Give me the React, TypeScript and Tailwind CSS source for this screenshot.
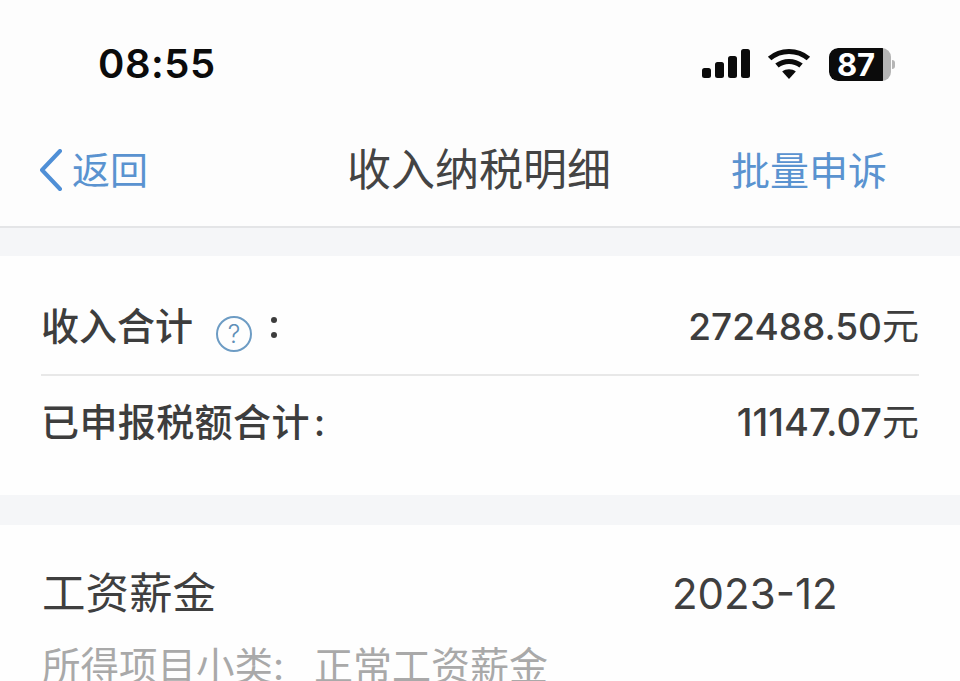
export default function App() {
  const font = { fontFamily: '"Inter", "Noto Sans CJK SC", sans-serif' };
  return (
    <div className="w-[960px] h-[681px] overflow-hidden bg-white flex flex-col" style={font}>
      {/* status bar */}
      <div className="h-[130px] shrink-0 flex items-start justify-between pt-[40px] pl-[98px] pr-[65px] bg-[#fdfdfd]">
        <div className="text-[40px] leading-[48px] font-semibold text-[#0b0b0b] tracking-[0.5px]">08:55</div>
        <div className="flex items-center gap-[19px] h-[48px]">
          <svg width="48" height="30" viewBox="0 0 48 30" fill="#0b0b0b">
            <rect x="0" y="19" width="9" height="10" rx="2.5" />
            <rect x="13" y="13" width="9" height="16" rx="2.5" />
            <rect x="26" y="7" width="9" height="22" rx="2.5" />
            <rect x="39" y="0" width="9" height="29" rx="2.5" />
          </svg>
          <svg width="44" height="32" viewBox="0 0 42 32" preserveAspectRatio="none" fill="none" stroke="#0b0b0b" strokeWidth="5" className="ml-[-2px]">
            <path d="M2.5 10.5 C13 1, 29 1, 39.5 10.5" />
            <path d="M9.5 17.5 C16 12, 26 12, 32.5 17.5" />
            <path d="M21 31 L14.5 23.5 C18 20.5, 24 20.5, 27.5 23.5 Z" fill="#0b0b0b" stroke="none" />
          </svg>
          <div className="flex items-center ml-[-1px]">
            <div className="relative w-[62px] h-[33px] rounded-[9px] bg-[#b5b5b5] overflow-hidden">
              <div className="w-[54px] h-full bg-[#0b0b0b] flex items-center justify-center text-white font-bold text-[31px] leading-none rounded-l-[9px]">87</div>
            </div>
            <div className="w-[3px] h-[9px] rounded-r-full bg-[#b5b5b5] ml-[1px]" />
          </div>
        </div>
      </div>

      {/* nav */}
      <div className="h-[96px] shrink-0 flex items-center justify-between pl-[39px] pr-[73px] pb-[16px] bg-[#fdfdfd] relative">
        <div className="flex items-center gap-[9px] text-[#5a93d0] text-[38px] leading-none">
          <svg width="24" height="42" viewBox="0 0 24 42" fill="none" stroke="#4f8fd6" strokeWidth="4" strokeLinecap="round" strokeLinejoin="round">
            <path d="M21 2 L3 21 L21 40" />
          </svg>
          <span>返回</span>
        </div>
        <div className="absolute left-[347px] top-[10px] text-[44px] leading-[60px] text-[#444444]">收入纳税明细</div>
        <div className="text-[#5a93d0] text-[39px] leading-none">批量申诉</div>
      </div>
      <div className="h-[2px] shrink-0 bg-[#e4e5e7]" />
      <div className="h-[28px] shrink-0 bg-[#f5f6f8]" />

      {/* summary */}
      <div className="h-[239px] shrink-0 bg-[#fefefe] px-[41px] flex flex-col">
        <div className="h-[120px] flex items-end justify-between pb-[1px] border-b-2 border-[#e8e8e8]">
          <div className="flex items-center h-[66px] pb-[28px] text-[38px] leading-none text-[#3d3d3d] font-medium">
            <span>收入合计</span>
            <span className="ml-[23px] mt-[16px] w-[36px] h-[36px] rounded-full border-2 border-[#6d9cc4] text-[#5f8fb8] flex items-center justify-center text-[25px] font-light leading-none">?</span>
            <span className="ml-[19px] mt-[2px] flex flex-col gap-[9px]">
              <i className="block w-[6px] h-[6px] rounded-full bg-[#3d3d3d]" />
              <i className="block w-[6px] h-[6px] rounded-full bg-[#3d3d3d]" />
            </span>
          </div>
          <div className="h-[66px] pb-[28px] flex items-center text-[37px] leading-none text-[#3d3d3d] font-medium">272488.50<span className="text-[37px] font-normal">元</span></div>
        </div>
        <div className="h-[93px] flex items-center justify-between pb-[2px] text-[#3d3d3d] leading-none">
          <div className="text-[38px] font-medium tracking-[0.4px]">已申报税额合计<span className="ml-[4px]">:</span></div>
          <div className="text-[38px] font-medium">11147.07<span className="text-[37px] font-normal">元</span></div>
        </div>
      </div>
      <div className="h-[30px] shrink-0 bg-[#f5f6f8]" />

      {/* record */}
      <div className="flex-1 bg-[#fefefe] pl-[42px] pt-[41px]">
        <div className="flex items-center h-[56px]">
          <div className="w-[630px] text-[43.5px] leading-none text-[#3f3f3f]">工资薪金</div>
          <div className="text-[42px] leading-none text-[#3f3f3f]">2023-12</div>
        </div>
        <div className="mt-[18px] text-[38.5px] leading-[52px] text-[#a9a9a9] whitespace-nowrap">所得项目小类:<span className="ml-[30px] text-[39px]">正常工资薪金</span></div>
      </div>
    </div>
  );
}
